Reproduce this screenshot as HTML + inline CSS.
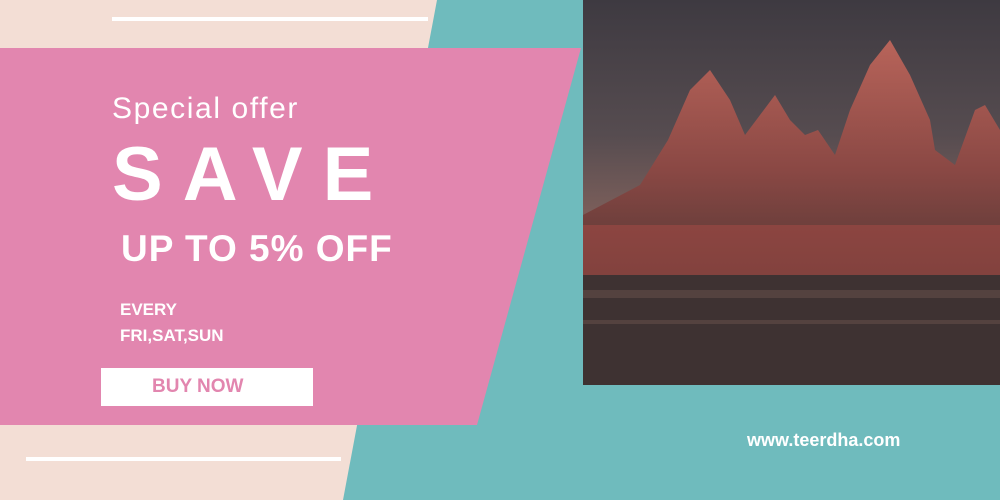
<!DOCTYPE html>
<html><head><style>
body{margin:0;width:1000px;height:500px;overflow:hidden;position:relative;background:#f3ded5;font-family:"Liberation Sans",sans-serif}
.a{position:absolute;white-space:nowrap}
</style></head><body>
<svg class="a" style="left:0;top:0" width="1000" height="500">
<polygon points="437,0 1000,0 1000,500 343,500" fill="#6fbbbd"/>
<polygon points="0,48 581,48 477,425 0,425" fill="#e286af"/>
<rect x="112" y="17" width="316" height="4" fill="#fff"/>
<rect x="26" y="457" width="315" height="4" fill="#fff"/>
<defs>
<linearGradient id="sky" x1="0" y1="0" x2="0" y2="1">
<stop offset="0" stop-color="#3e3a41"/><stop offset="0.35" stop-color="#564c50"/><stop offset="0.55" stop-color="#7a5e5a"/><stop offset="1" stop-color="#3a2e2e"/></linearGradient>
<linearGradient id="tm" x1="0" y1="0" x2="0" y2="1">
<stop offset="0" stop-color="#b8645a"/><stop offset="0.5" stop-color="#8a4844"/><stop offset="1" stop-color="#4a3432"/></linearGradient>
</defs>
<rect x="583" y="0" width="417" height="385" fill="url(#sky)"/>
<polygon fill="url(#tm)" points="583,215 640,185 668,140 690,90 710,70 730,100 745,135 760,115 775,95 790,120 805,135 818,130 835,155 850,110 870,65 890,40 910,75 930,120 935,150 955,165 975,110 985,105 1000,130 1000,300 583,300"/>
<rect x="583" y="225" width="417" height="50" fill="#a04a44" opacity="0.6"/>
<rect x="583" y="275" width="417" height="110" fill="#3e3232"/>
<rect x="583" y="290" width="417" height="8" fill="#54423f"/>
<rect x="583" y="320" width="417" height="4" fill="#54423f"/>
</svg>
<div class="a" style="left:112px;top:92px;color:#fff;font-size:30px;letter-spacing:1.6px">Special offer</div>
<div class="a" style="left:112px;top:132px;color:#fff;font-size:76px;font-weight:bold;letter-spacing:20px;line-height:86px">SAVE</div>
<div class="a" style="left:121px;top:228px;color:#fff;font-size:37px;font-weight:bold;letter-spacing:1px">UP TO 5% OFF</div>
<div class="a" style="left:120px;top:297px;color:#fff;font-size:17px;font-weight:bold;line-height:26px">EVERY<br>FRI,SAT,SUN</div>
<div class="a" style="left:101px;top:368px;width:212px;height:38px;background:#fff;color:#e286af;font-size:19px;font-weight:bold;line-height:38px"><span style="position:absolute;left:51px">BUY NOW</span></div>
<div class="a" style="left:747px;top:430px;color:#fff;font-size:18px;font-weight:bold">www.teerdha.com</div>
</body></html>
